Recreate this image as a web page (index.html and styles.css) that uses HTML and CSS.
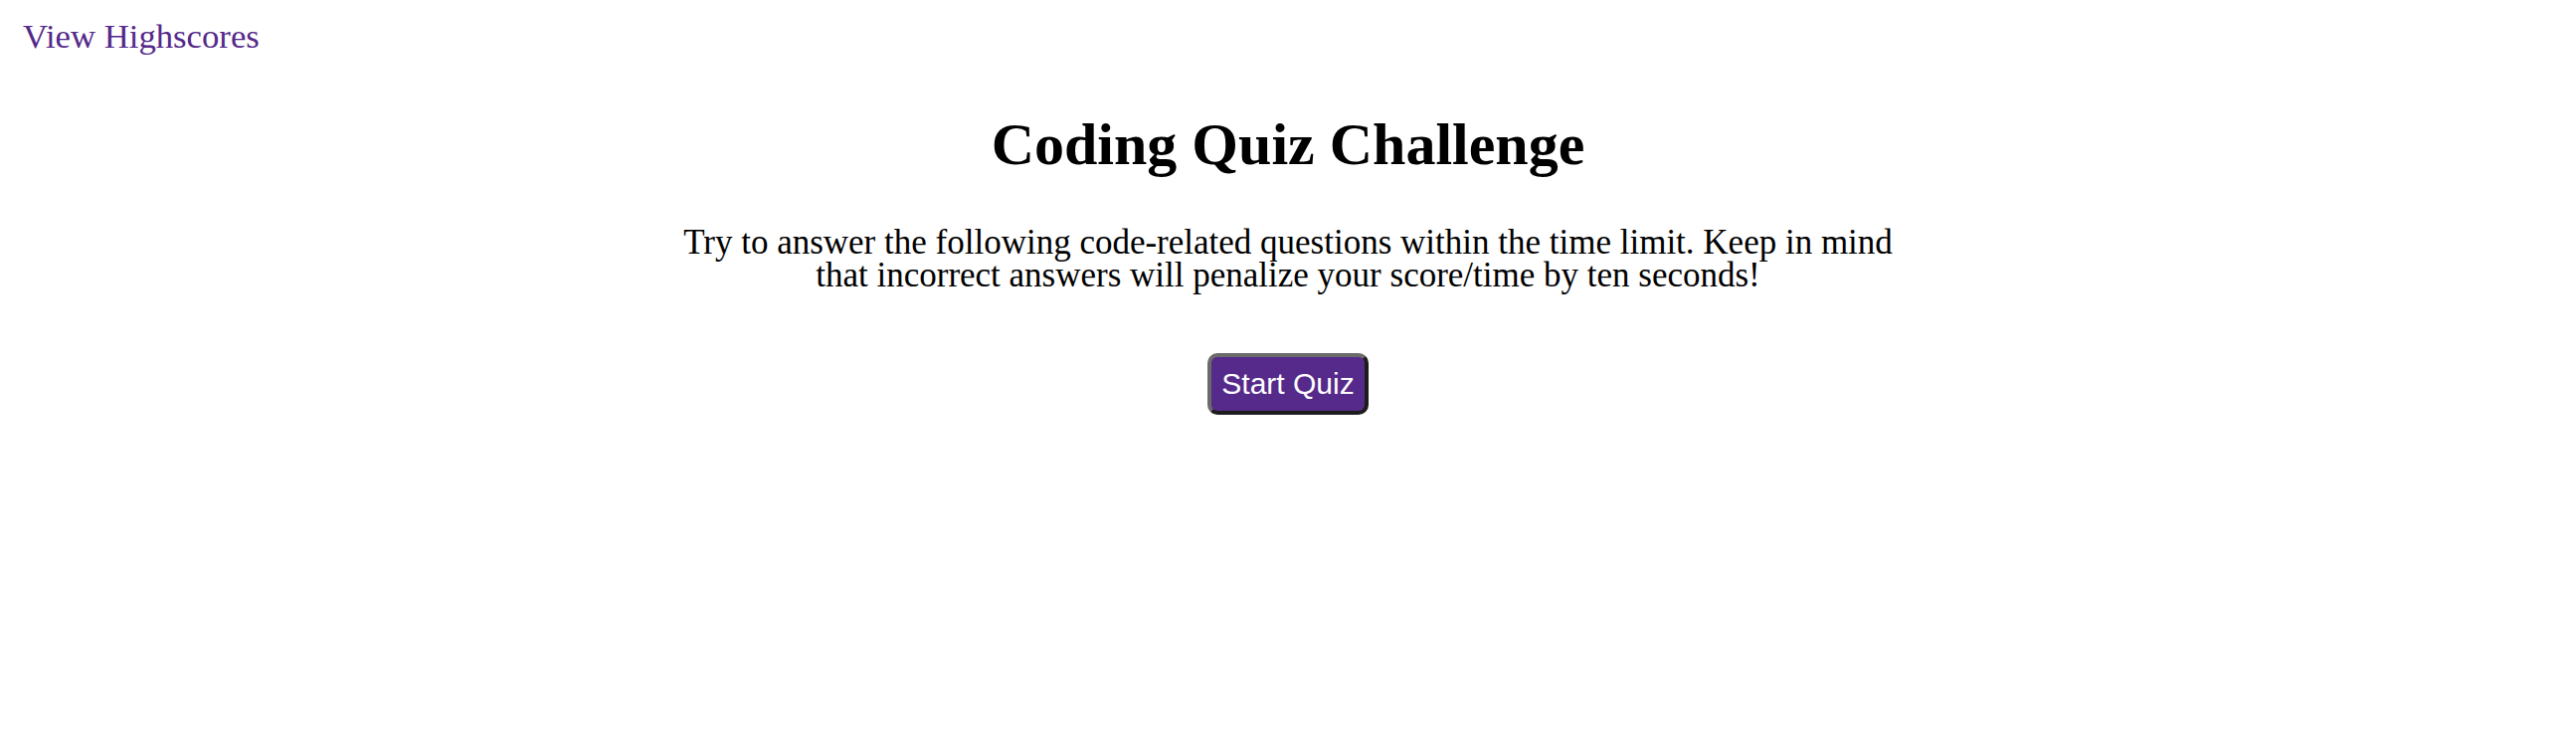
FILE: index.html
```html
<!DOCTYPE html>
<html lang="en">
<head>
<meta charset="utf-8">
<title>Coding Quiz Challenge</title>
<link rel="stylesheet" href="styles.css">
</head>
<body>
<header class="topbar">
  <a class="highscores-link" href="#">View Highscores</a>
</header>
<main class="intro">
  <h1 class="intro-title">Coding Quiz Challenge</h1>
  <p class="intro-text">Try to answer the following code-related questions within the time limit. Keep in mind that incorrect answers will penalize your score/time by ten seconds!</p>
  <button class="start-btn" type="button">Start Quiz</button>
</main>
</body>
</html>
```

FILE: styles.css
```css
html, body {
  margin: 0;
  padding: 0;
  background: #ffffff;
}

body {
  font-family: "Liberation Serif", "Times New Roman", serif;
  color: #000000;
}

.topbar {
  display: flex;
  padding: 17px 0 0 23px;
}

.highscores-link {
  font-size: 34.7px;
  line-height: 40px;
  color: #55298a;
  text-decoration: none;
}

.intro {
  display: flex;
  flex-direction: column;
  align-items: center;
}

.intro-title {
  margin: 58px 0 0;
  font-size: 60px;
  line-height: 60px;
  font-weight: bold;
  text-align: center;
}

.intro-text {
  margin: 52px 0 0;
  width: 1240px;
  font-size: 35px;
  line-height: 33px;
  text-align: center;
}

.start-btn {
  margin-top: 62px;
  font-family: "Liberation Sans", Arial, sans-serif;
  font-size: 30px;
  line-height: 34px;
  color: #ffffff;
  background: #562a8a;
  border-style: solid;
  border-width: 4px;
  border-color: #6b6b6b #1c1c1c #1c1c1c #6b6b6b;
  border-radius: 10px;
  padding: 10px 10px;
  cursor: pointer;
}
```
